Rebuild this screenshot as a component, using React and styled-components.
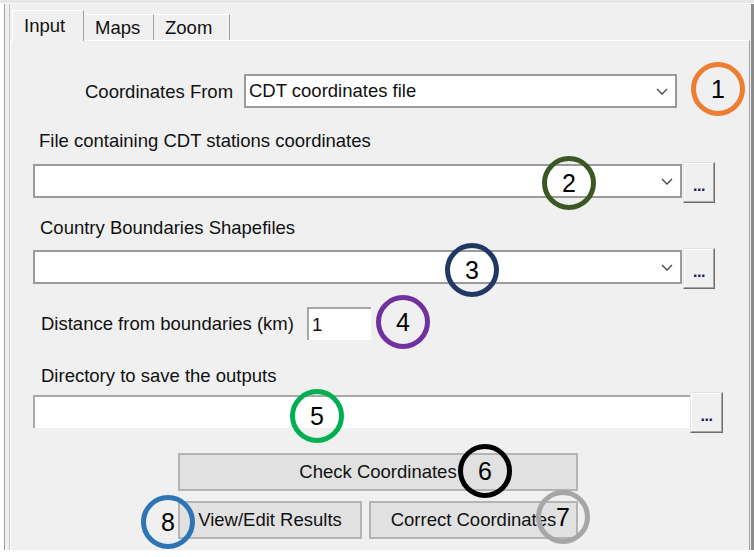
import React from "react";
import styled, { createGlobalStyle } from "styled-components";

const Global = createGlobalStyle`
  body {
    margin: 0;
    background: #ffffff;
    font-family: "Liberation Sans", Arial, sans-serif;
  }
`;

const Window = styled.div`
  width: 754px;
  height: 557px;
  background: #ffffff;
  display: flex;
  flex-direction: column;
  overflow: hidden;
  color: #111;
  font-size: 18.5px;
`;

const TopStrip = styled.div`
  height: 3px;
  background: #e6e6e6;
  border-bottom: 1px solid #fafafa;
`;

const Frame = styled.div`
  display: flex;
  margin-left: 4px;
  border-left: 1px solid #a0a0a0;
  padding-left: 4px;
  background: #f0f0f0;
`;

const RightEdge = styled.div`
  width: 1px;
  background: #f0f0f0;
  border-right: 3px solid #8c8c8c;
`;

const Notebook = styled.div`
  flex: 1;
  display: flex;
  flex-direction: column;
  border-left: 1px solid #c4c4c4;
`;

const TabRow = styled.div`
  display: flex;
  align-items: flex-end;
  padding: 6px 0 0 2px;
`;

const Tab = styled.div`
  position: relative;
  box-sizing: border-box;
  width: ${p => p.$w}px;
  height: ${p => (p.$active ? 31 : 26)}px;
  margin-bottom: ${p => (p.$active ? -1 : 0)}px;
  z-index: ${p => (p.$active ? 1 : 0)};
  padding-left: ${p => (p.$active ? 11 : 10)}px;
  display: flex;
  align-items: center;
  background: #f0f0f0;
  border-top: 1px solid #ffffff;
  border-left: 1px solid ${p => (p.$first ? "#ffffff" : "transparent")};
  border-right: 1px solid #a0a0a0;
`;

const Panel = styled.div`
  position: relative;
  display: flex;
  flex-direction: column;
  padding: 33px 0 11px 22px;
  border-top: 1px solid #ffffff;
  border-left: 1px solid #ffffff;
  border-right: 1px solid #a0a0a0;
`;

const Row = styled.div`
  display: flex;
  align-items: flex-start;
  margin-top: ${p => p.$mt || 0}px;
  padding-left: ${p => p.$pl || 0}px;
`;

const Label = styled.div`
  height: 21px;
  line-height: 21px;
  white-space: nowrap;
  margin-top: ${p => p.$mt || 0}px;
  padding-left: ${p => p.$pl || 0}px;
  width: ${p => (p.$w ? `${p.$w}px` : "auto")};
  box-sizing: border-box;
  align-self: ${p => (p.$center ? "center" : "auto")};
`;

const Combo = styled.div`
  box-sizing: border-box;
  width: ${p => p.$w}px;
  height: 34px;
  margin-top: ${p => p.$mt || 0}px;
  background: #ffffff;
  border: 2px solid #9a9a9a;
  display: flex;
  align-items: center;
  padding: 0 7px 0 3px;
`;

const ComboText = styled.span`
  flex: 1;
  white-space: nowrap;
`;

const Chevron = () => (
  <svg width="12" height="7" viewBox="0 0 12 7">
    <polyline points="1,1 6,6 11,1" fill="none" stroke="#444" strokeWidth="1.3" />
  </svg>
);

const Browse = styled.div`
  box-sizing: border-box;
  width: ${p => p.$w}px;
  height: 41px;
  margin-left: ${p => p.$ml || 0}px;
  background: #f0f0f0;
  border: 1px solid;
  border-color: #e4e4e4 #6e6e6e #6e6e6e #e4e4e4;
  box-shadow: inset -1px -1px #a8a8a8, inset 1px 1px #ffffff;
  font-size: 16px;
  font-weight: bold;
  color: #1a1a5a;
  letter-spacing: -0.5px;
  display: flex;
  align-items: center;
  justify-content: center;
  padding-top: 6px;
`;

const Entry = styled.div`
  box-sizing: border-box;
  width: ${p => p.$w}px;
  height: 33px;
  margin-top: ${p => p.$mt || 0}px;
  background: #ffffff;
  border-top: 2px solid #a8a8a8;
  border-left: 2px solid #a8a8a8;
  padding-left: 3px;
  line-height: 31px;
`;

const Button = styled.div`
  box-sizing: border-box;
  width: ${p => p.$w}px;
  height: 38px;
  background: #e1e1e1;
  border: 2px solid #b4b4b4;
  display: flex;
  align-items: center;
  justify-content: center;
  white-space: nowrap;
`;

const ButtonRow = styled.div`
  display: flex;
  gap: 7px;
  margin-top: ${p => p.$mt || 0}px;
  margin-left: 145px;
`;

const Marker = styled.div`
  position: absolute;
  left: ${p => p.$x - 38}px;
  top: ${p => p.$y - 68}px;
  width: 54px;
  height: 54px;
  box-sizing: border-box;
  border: 5px solid ${p => p.$color};
  border-radius: 50%;
  display: flex;
  align-items: center;
  justify-content: center;
  font-size: 25px;
  color: #000;
  z-index: 2;
`;

const markers = [
  { n: 1, x: 718, y: 89, color: "#ed7d31" },
  { n: 2, x: 569, y: 183, color: "#3a5724" },
  { n: 3, x: 472, y: 270, color: "#203864" },
  { n: 4, x: 403, y: 322, color: "#7030a0" },
  { n: 5, x: 317, y: 416, color: "#00b050" },
  { n: 6, x: 485, y: 471, color: "#000000" },
  { n: 7, x: 563, y: 517, color: "#a6a6a6" },
  { n: 8, x: 168, y: 522, color: "#2e75b6" },
];

export default function App() {
  return (
    <>
      <Global />
      <Window>
        <TopStrip />
        <Frame>
          <Notebook>
            <TabRow>
              <Tab $active $first $w={72}>Input</Tab>
              <Tab $w={70}>Maps</Tab>
              <Tab $w={76}>Zoom</Tab>
            </TabRow>
            <Panel>
              <Row $pl={52}>
                <Label $w={159} $center>Coordinates From</Label>
                <Combo $w={433}>
                  <ComboText>CDT coordinates file</ComboText>
                  <Chevron />
                </Combo>
              </Row>

              <Label $mt={22} $pl={6}>File containing CDT stations coordinates</Label>
              <Row $mt={11}>
                <Combo $w={649} $mt={2}>
                  <ComboText />
                  <Chevron />
                </Combo>
                <Browse $w={32} $ml={1}>...</Browse>
              </Row>

              <Label $mt={14} $pl={7}>Country Boundaries Shapefiles</Label>
              <Row $mt={10}>
                <Combo $w={649} $mt={2}>
                  <ComboText />
                  <Chevron />
                </Combo>
                <Browse $w={32} $ml={1}>...</Browse>
              </Row>

              <Row $mt={18}>
                <Label $w={274} $pl={8} $center>Distance from boundaries (km)</Label>
                <Entry $w={64}>1</Entry>
              </Row>

              <Label $mt={25} $pl={8}>Directory to save the outputs</Label>
              <Row $mt={6}>
                <Entry $w={657} $mt={3} />
                <Browse $w={33}>...</Browse>
              </Row>

              <ButtonRow $mt={20}>
                <Button $w={400}>Check Coordinates</Button>
              </ButtonRow>
              <ButtonRow $mt={10}>
                <Button $w={184}>View/Edit Results</Button>
                <Button $w={209}>Correct Coordinates</Button>
              </ButtonRow>

              {markers.map(m => (
                <Marker key={m.n} $x={m.x} $y={m.y} $color={m.color}>
                  {m.n}
                </Marker>
              ))}
            </Panel>
          </Notebook>
          <RightEdge />
        </Frame>
      </Window>
    </>
  );
}
